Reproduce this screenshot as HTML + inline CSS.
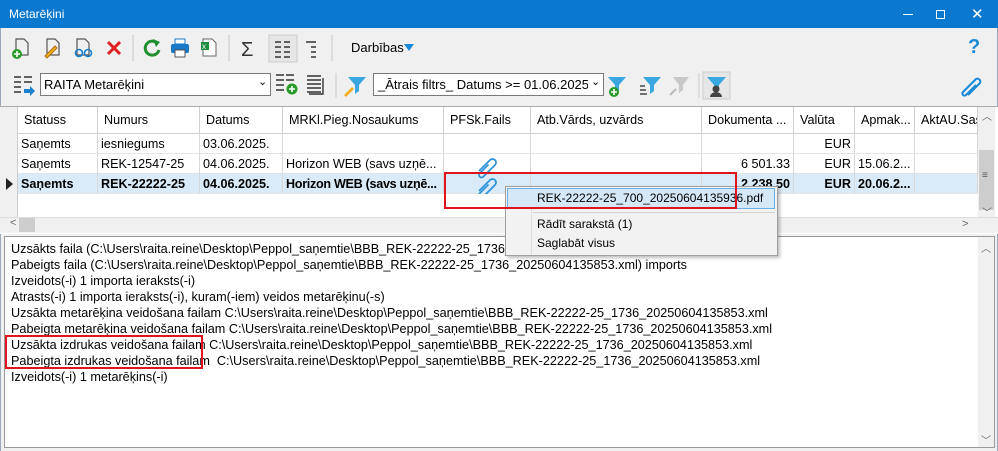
<!DOCTYPE html>
<html><head><meta charset="utf-8">
<style>
*{box-sizing:border-box;margin:0;padding:0}
body{width:998px;height:451px;overflow:hidden;background:#f0f0f0;font-family:"Liberation Sans",sans-serif;font-size:13px;color:#000;position:relative}
.a{position:absolute}
.t{position:absolute;white-space:nowrap}
.cell{position:absolute;white-space:nowrap;overflow:hidden;height:20px;line-height:20px;padding:0 3px;border-right:1px solid #d8d8d8;border-bottom:1px solid #e4e4e4;font-size:12.6px}
.hd{position:absolute;height:26px;line-height:26px;padding:0 6px;border-right:1px solid #d0d0d0;white-space:nowrap;overflow:hidden;background:#fff;font-size:12.6px}
.log div{height:16px;line-height:16px;white-space:nowrap;font-size:12.65px}
</style></head><body>
<div class="a" style="left:0;top:0;width:998px;height:28px;background:#0a78cf"></div>
<div class="t" style="left:9px;top:7px;color:#fff;font-size:12px">Metarēķini</div>
<div class="a" style="left:903px;top:14px;width:10px;height:1px;background:#fff"></div>
<div class="a" style="left:936px;top:10px;width:9px;height:9px;border:1px solid #fff"></div>
<div class="t" style="left:971px;top:5px;color:#fff;font-size:15px">✕</div>
<div class="a" style="left:0;top:28px;width:1px;height:423px;background:#9ab"></div>
<div class="a" style="left:997px;top:28px;width:1px;height:423px;background:#9ab"></div>

<svg class="a" style="left:0;top:30px" width="998" height="36">
 <g fill="none" stroke="#555" stroke-width="1.2">
  <path d="M16 9h8l4 4v12H16z"/><path d="M47 9h8l4 4v12H47z"/><path d="M77 9h8l4 4v12H77z"/>
 </g>
 <circle cx="17" cy="24" r="5" fill="#2a9a2a"/><path d="M14 24h6M17 21v6" stroke="#fff" stroke-width="1.6"/>
 <path d="M45 26l10-10 2 2-10 10z" fill="#f0b020" stroke="#b07010"/>
 <circle cx="79" cy="23" r="3.5" fill="none" stroke="#1a80d0" stroke-width="1.6"/><circle cx="88" cy="23" r="3.5" fill="none" stroke="#1a80d0" stroke-width="1.6"/>
 <path d="M108 12l12 12M120 12l-12 12" stroke="#e02020" stroke-width="3"/>
 <line x1="133" y1="5" x2="133" y2="31" stroke="#c8c8c8"/>
 <path d="M157 13a7 7 0 1 0 2 7" fill="none" stroke="#1e8e2e" stroke-width="3"/><path d="M153 9l7 3-4 5z" fill="#1e8e2e"/>
 <rect x="171" y="14" width="18" height="9" rx="2" fill="#1a78c8"/><rect x="175" y="9" width="10" height="5" fill="#fff" stroke="#1a78c8"/><rect x="175" y="20" width="10" height="7" fill="#fff" stroke="#555"/>
 <path d="M203 9h9l4 4v13h-13z" fill="#fff" stroke="#666"/><rect x="201" y="12" width="8" height="8" fill="#1f8c3f"/><text x="202" y="19" fill="#fff" font-size="8" font-family="Liberation Sans">x</text>
 <line x1="229" y1="5" x2="229" y2="31" stroke="#c8c8c8"/>
 <text x="241" y="26" font-size="20" fill="#333" font-family="Liberation Sans">Σ</text>
 <rect x="269" y="5" width="28" height="27" fill="#e6e6e6" stroke="#ccc"/>
 <path d="M275 12h6M284 12h6M275 17h6M284 17h6M275 22h6M284 22h6M275 27h6M284 27h6" stroke="#333" stroke-width="1.5"/>
 <path d="M306 12h10M311 17h5M311 22h5M311 27h5" stroke="#333" stroke-width="1.5"/>
 <line x1="332" y1="5" x2="332" y2="31" stroke="#c8c8c8"/>
</svg>
<div class="t" style="left:351px;top:40px;font-size:13px">Darbības</div>
<svg class="a" style="left:404px;top:44px" width="10" height="8"><path d="M0 0h10L5 7z" fill="#1a8ad8"/></svg>
<div class="t" style="left:968px;top:36px;color:#1a8ad8;font-size:20px;font-weight:bold">?</div>

<svg class="a" style="left:0;top:68px" width="998" height="34">
 <path d="M14 9h7M14 14h7M14 19h7M14 24h7M24 9h8M24 14h8" stroke="#333" stroke-width="1.6"/>
 <path d="M24 21h6v-3l5 5-5 5v-3h-6z" fill="#1a80d0"/>
 <path d="M276 7h8M286 7h8M276 12h8M286 12h8M276 17h8M276 22h8" stroke="#333" stroke-width="1.6"/>
 <circle cx="292" cy="21" r="5.5" fill="#2a9a2a"/><path d="M289 21h6M292 18v6" stroke="#fff" stroke-width="1.6"/>
 <path d="M307 8h14M307 12h14M307 16h14M307 20h14M307 24h14M323 10v16h-14" stroke="#333" stroke-width="1.4" fill="none"/>
 <line x1="336" y1="5" x2="336" y2="30" stroke="#c8c8c8"/>
 <path d="M348 9h18l-7 8v6l-4 3v-9z" fill="#3aa8e0"/><path d="M344 27l8-8 2 2-8 8z" fill="#f0b020"/>
 <path d="M608 9h18l-7 8v6l-4 3v-9z" fill="#3aa8e0"/><circle cx="614" cy="24" r="5" fill="#2a9a2a"/><path d="M611 24h6M614 21v6" stroke="#fff" stroke-width="1.6"/>
 <path d="M643 9h18l-7 8v6l-4 3v-9z" fill="#3aa8e0"/><path d="M640 18h5M640 22h6M640 26h7" stroke="#444" stroke-width="1.4"/>
 <path d="M673 9h16l-6 8v5l-4 3v-8z" fill="#c8c8c8"/><path d="M670 27l6-6" stroke="#bbb" stroke-width="2"/>
 <line x1="699" y1="5" x2="699" y2="30" stroke="#c8c8c8"/>
 <rect x="703" y="4" width="27" height="27" fill="#e6e6e6" stroke="#ccc"/>
 <path d="M707 9h19l-7 8v4h-5v-4z" fill="#3aa8e0"/><circle cx="716" cy="21" r="3.5" fill="#444"/><path d="M710 29a6 5 0 0 1 12 0z" fill="#444"/>
 <path d="M968 27l12-12a3 3 0 0 0-4-4l-13 13a2 2 0 0 0 3 3l10-10" fill="none" stroke="#1a8ad8" stroke-width="2"/>
</svg>
<div class="a" style="left:40px;top:73px;width:231px;height:23px;background:#fff;border:1px solid #7a7a7a"></div>
<div class="t" style="left:44px;top:77px">RAITA Metarēķini</div>
<div class="t" style="left:258px;top:75px;font-size:11px">⌄</div>
<div class="a" style="left:373px;top:73px;width:231px;height:23px;background:#fff;border:1px solid #7a7a7a;overflow:hidden"><span class="t" style="left:4px;top:3px">_Ātrais filtrs_ Datums &gt;= 01.06.2025</span><span class="a" style="left:214px;top:0;width:16px;height:21px;background:#fff"></span><span class="t" style="left:217px;top:1px;font-size:11px">⌄</span></div>

<div class="a" style="left:0;top:106px;width:998px;height:128px;background:#fff;border-top:1px solid #aaa"></div>
<div class="hd" style="left:0;top:107px;width:18px;background:#f0f0f0"></div>
<div class="hd" style="left:18px;top:107px;width:80px">Statuss</div>
<div class="hd" style="left:98px;top:107px;width:102px">Numurs</div>
<div class="hd" style="left:200px;top:107px;width:83px">Datums</div>
<div class="hd" style="left:283px;top:107px;width:161px">MRKl.Pieg.Nosaukums</div>
<div class="hd" style="left:444px;top:107px;width:87px">PFSk.Fails</div>
<div class="hd" style="left:531px;top:107px;width:171px">Atb.Vārds, uzvārds</div>
<div class="hd" style="left:702px;top:107px;width:92px">Dokumenta ...</div>
<div class="hd" style="left:794px;top:107px;width:61px">Valūta</div>
<div class="hd" style="left:855px;top:107px;width:60px">Apmak...</div>
<div class="hd" style="left:915px;top:107px;width:63px">AktAU.Sas</div>
<div class="a" style="left:0;top:133px;width:978px;height:1px;background:#d0d0d0"></div>
<div class="a" style="left:0;top:133px;width:18px;height:84px;background:#f0f0f0;border-right:1px solid #ccc"></div>
<div class="a" style="left:18px;top:174px;width:960px;height:20px;background:#d9ebf9"></div>
<div class="cell" style="left:18px;top:134px;width:80px">Saņemts</div>
<div class="cell" style="left:98px;top:134px;width:102px">iesniegums</div>
<div class="cell" style="left:200px;top:134px;width:83px">03.06.2025.</div>
<div class="cell" style="left:283px;top:134px;width:161px"></div>
<div class="cell" style="left:444px;top:134px;width:87px"></div>
<div class="cell" style="left:531px;top:134px;width:171px"></div>
<div class="cell" style="left:702px;top:134px;width:92px"></div>
<div class="cell" style="left:794px;top:134px;width:61px;text-align:right">EUR</div>
<div class="cell" style="left:855px;top:134px;width:60px"></div>
<div class="cell" style="left:915px;top:134px;width:63px"></div>

<div class="cell" style="left:18px;top:154px;width:80px">Saņemts</div>
<div class="cell" style="left:98px;top:154px;width:102px">REK-12547-25</div>
<div class="cell" style="left:200px;top:154px;width:83px">04.06.2025.</div>
<div class="cell" style="left:283px;top:154px;width:161px">Horizon WEB (savs uzņē...</div>
<div class="cell" style="left:444px;top:154px;width:87px"></div>
<div class="cell" style="left:531px;top:154px;width:171px"></div>
<div class="cell" style="left:702px;top:154px;width:92px;text-align:right">6 501.33</div>
<div class="cell" style="left:794px;top:154px;width:61px;text-align:right">EUR</div>
<div class="cell" style="left:855px;top:154px;width:60px">15.06.2...</div>
<div class="cell" style="left:915px;top:154px;width:63px"></div>

<div style="font-weight:bold">
<div class="cell" style="left:18px;top:174px;width:80px">Saņemts</div>
<div class="cell" style="left:98px;top:174px;width:102px">REK-22222-25</div>
<div class="cell" style="left:200px;top:174px;width:83px">04.06.2025.</div>
<div class="cell" style="left:283px;top:174px;width:161px;letter-spacing:-0.3px">Horizon WEB (savs uzņē...</div>
<div class="cell" style="left:444px;top:174px;width:87px"></div>
<div class="cell" style="left:531px;top:174px;width:171px"></div>
<div class="cell" style="left:702px;top:174px;width:92px;text-align:right">2 238.50</div>
<div class="cell" style="left:794px;top:174px;width:61px;text-align:right">EUR</div>
<div class="cell" style="left:855px;top:174px;width:60px">20.06.2...</div>
<div class="cell" style="left:915px;top:174px;width:63px"></div>
</div>
<svg class="a" style="left:6px;top:178px" width="8" height="12"><path d="M0 0l7 6-7 6z" fill="#222"/></svg>
<svg class="a" style="left:474px;top:154px" width="28" height="40">
 <g fill="none" stroke="#2a90d8" stroke-width="1.7">
 <path d="M5 17l11-11a3.5 3.5 0 0 1 5 5L9 23a2.5 2.5 0 0 1-3.5-3.5l9-9"/>
 <path d="M5 37l11-11a3.5 3.5 0 0 1 5 5L9 43a2.5 2.5 0 0 1-3.5-3.5l9-9"/></g>
</svg>
<div class="a" style="left:978px;top:107px;width:17px;height:110px;background:#f0f0f0"></div>
<div class="t" style="left:982px;top:108px;font-size:10px;color:#666">︿</div>
<div class="a" style="left:979px;top:150px;width:15px;height:60px;background:#cdcdcd"></div>
<div class="t" style="left:982px;top:170px;font-size:10px;color:#555">≡</div>
<div class="t" style="left:982px;top:204px;font-size:10px;color:#666">﹀</div>
<div class="a" style="left:0;top:217px;width:998px;height:16px;background:#f0f0f0;border-top:1px solid #ddd"></div>
<div class="t" style="left:10px;top:217px;font-size:11px;color:#666">&lt;</div>
<div class="a" style="left:19px;top:218px;width:16px;height:14px;background:#cdcdcd"></div>
<div class="t" style="left:962px;top:218px;font-size:11px;color:#666">&gt;</div>

<div class="a" style="left:4px;top:236px;width:991px;height:212px;background:#fff;border:1px solid #999"></div>
<div class="a log" style="left:11px;top:241px">
<div>Uzsākts faila (C:\Users\raita.reine\Desktop\Peppol_saņemtie\BBB_REK-22222-25_1736_20250604135853.xml)</div>
<div>Pabeigts faila (C:\Users\raita.reine\Desktop\Peppol_saņemtie\BBB_REK-22222-25_1736_20250604135853.xml) imports</div>
<div>Izveidots(-i) 1 importa ieraksts(-i)</div>
<div>Atrasts(-i) 1 importa ieraksts(-i), kuram(-iem) veidos metarēķinu(-s)</div>
<div>Uzsākta metarēķina veidošana failam C:\Users\raita.reine\Desktop\Peppol_saņemtie\BBB_REK-22222-25_1736_20250604135853.xml</div>
<div>Pabeigta metarēķina veidošana failam C:\Users\raita.reine\Desktop\Peppol_saņemtie\BBB_REK-22222-25_1736_20250604135853.xml</div>
<div>Uzsākta izdrukas veidošana failam C:\Users\raita.reine\Desktop\Peppol_saņemtie\BBB_REK-22222-25_1736_20250604135853.xml</div>
<div>Pabeigta izdrukas veidošana failam&nbsp; C:\Users\raita.reine\Desktop\Peppol_saņemtie\BBB_REK-22222-25_1736_20250604135853.xml</div>
<div>Izveidots(-i) 1 metarēķins(-i)</div>
</div>
<div class="a" style="left:978px;top:237px;width:16px;height:210px;background:#f0f0f0"></div>
<div class="t" style="left:981px;top:240px;font-size:10px;color:#666">︿</div>
<div class="t" style="left:981px;top:432px;font-size:10px;color:#666">﹀</div>
<div class="a" style="left:5px;top:335px;width:198px;height:34px;border:2px solid #e0141e"></div>

<div class="a" style="left:505px;top:186px;width:273px;height:70px;background:#f2f2f2;border:1px solid #a0a0a0;box-shadow:2px 2px 3px rgba(0,0,0,.25)"></div>
<div class="a" style="left:531px;top:187px;width:1px;height:68px;background:#ddd"></div>
<div class="a" style="left:507px;top:188px;width:268px;height:21px;background:#d5e8f8;border:1px solid #6cb0e8"></div>
<div class="t" style="left:537px;top:191px;font-size:12px">REK-22222-25_700_20250604135936.pdf</div>
<div class="a" style="left:533px;top:212px;width:242px;height:1px;background:#d0d0d0"></div>
<div class="t" style="left:537px;top:217px;font-size:12px">Rādīt sarakstā (1)</div>
<div class="t" style="left:537px;top:236px;font-size:12px">Saglabāt visus</div>
<div class="a" style="left:444px;top:172px;width:293px;height:37px;border:2px solid #e0141e"></div>
</body></html>
